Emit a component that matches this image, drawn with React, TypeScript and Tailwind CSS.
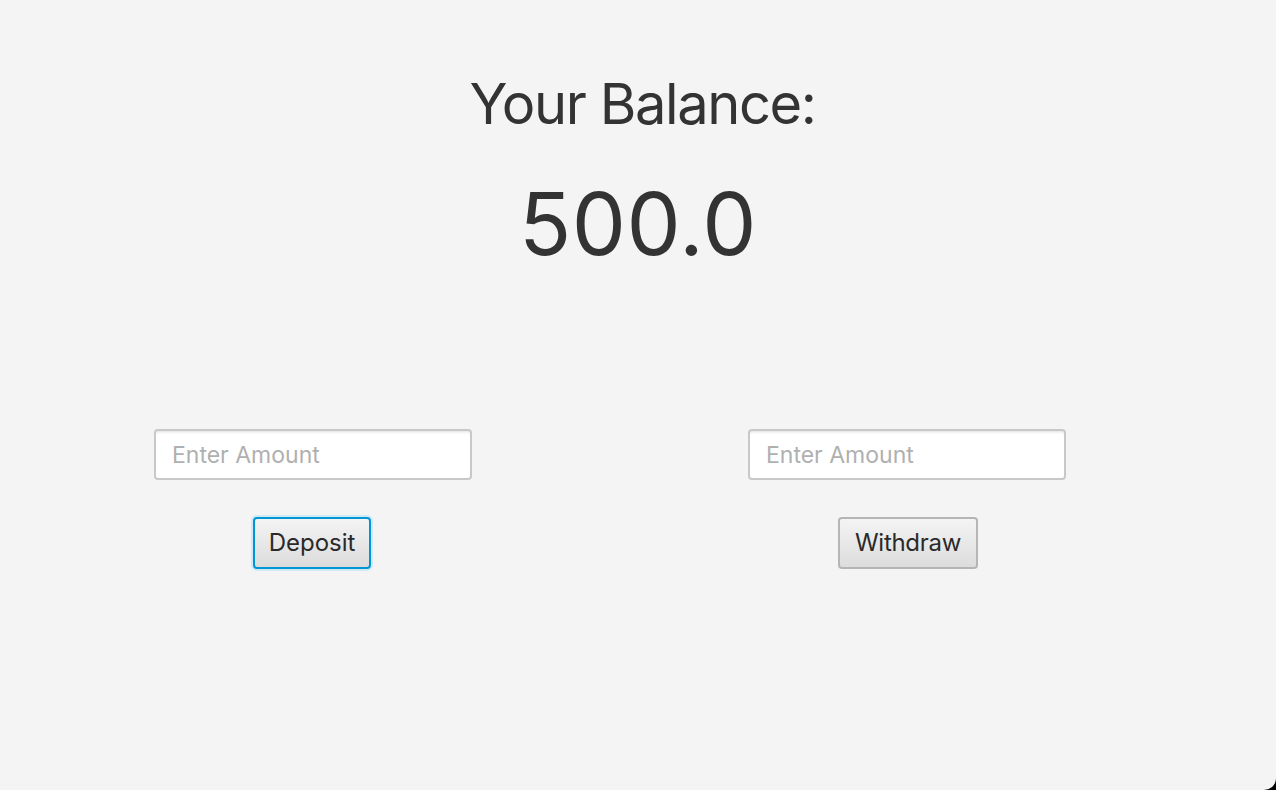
import React from "react";

export default function App() {
  const font = { fontFamily: "Inter, 'Noto Sans', sans-serif" };
  return (
    <div className="w-[1276px] h-[790px] bg-black overflow-hidden" style={font}>
      <div className="w-full h-full bg-[#f4f4f4] rounded-br-[12px] flex flex-col">
        <div className="flex flex-col items-center pt-[64px]">
          <div className="text-[56px] leading-[80px] text-[#333333] tracking-[-1.4px] pl-[9px]">Your Balance:</div>
          <div className="text-[86px] leading-[100px] text-[#333333] mt-[30px] tracking-[0.5px]">500.0</div>
        </div>
        <div className="flex pl-[154px] gap-[276px] mt-[155px]">
          <div className="flex flex-col items-center w-[318px]">
            <input
              placeholder="Enter Amount"
              className="w-[318px] h-[51px] rounded-[4px] border-2 border-[#c8c8c8] bg-white px-[16px] text-[23px] text-[#333] placeholder:text-[#b0b0b0] outline-none shadow-[inset_0_3px_3px_-2px_#e0e0e0]"
              style={font}
            />
            <button
              className="mt-[37px] h-[52px] px-[14px] rounded-[4px] border-2 border-[#0096d6] shadow-[0_0_0_2px_#cfe9f5] bg-gradient-to-b from-[#f4f4f4] to-[#dcdcdc] text-[24px] text-[#2a2a2a] -translate-x-[1px]"
              style={font}
            >
              Deposit
            </button>
          </div>
          <div className="flex flex-col items-center w-[318px]">
            <input
              placeholder="Enter Amount"
              className="w-[318px] h-[51px] rounded-[4px] border-2 border-[#c8c8c8] bg-white px-[16px] text-[23px] text-[#333] placeholder:text-[#b0b0b0] outline-none shadow-[inset_0_3px_3px_-2px_#e0e0e0]"
              style={font}
            />
            <button
              className="mt-[37px] h-[52px] px-[15px] rounded-[4px] border-2 border-[#b5b5b5] bg-gradient-to-b from-[#f4f4f4] to-[#dcdcdc] text-[24px] text-[#2a2a2a] tracking-[-0.3px] translate-x-[1px]"
              style={font}
            >
              Withdraw
            </button>
          </div>
        </div>
      </div>
    </div>
  );
}
